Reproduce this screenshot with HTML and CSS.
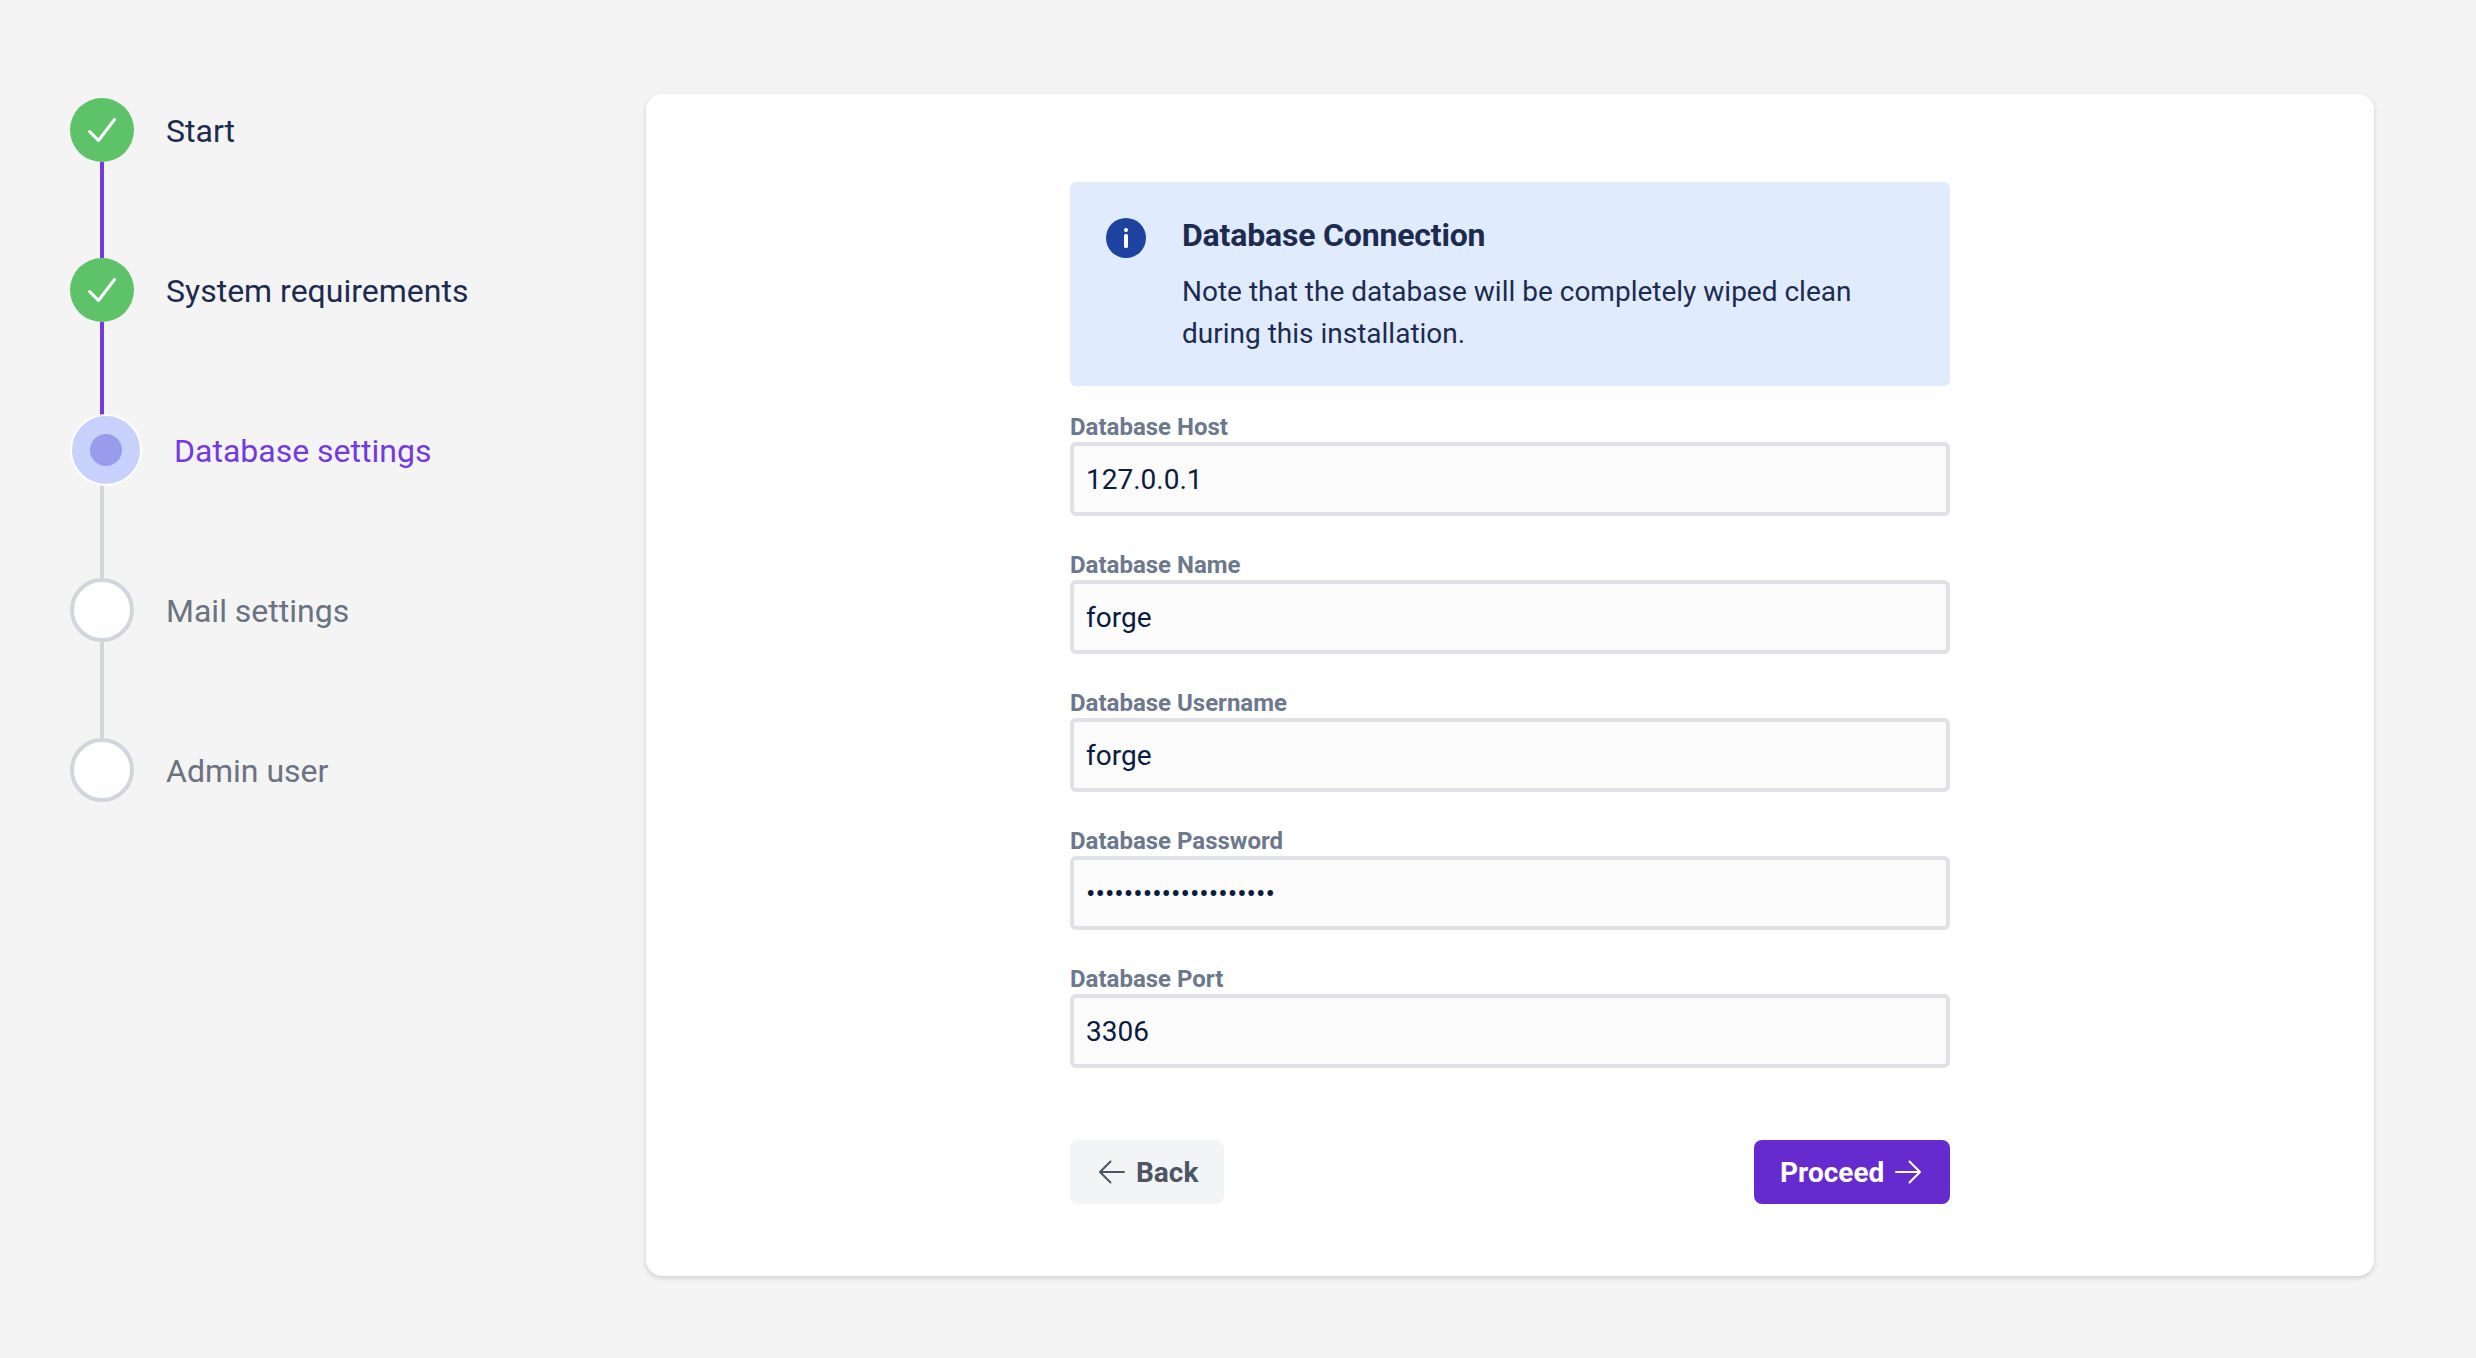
FILE: index.html
```html
<!DOCTYPE html>
<html lang="en">
<head>
<meta charset="utf-8">
<title>Installation</title>
<link rel="stylesheet" href="styles.css">
</head>
<body>
<div class="layout">
  <ol class="steps">
    <li class="step step-done">
      <span class="marker"><svg class="check" viewBox="0 0 64 64"><path d="M19.5 33.5 28.5 42.5 44.5 21.5"/></svg></span>
      <span class="step-name">Start</span>
    </li>
    <li class="step step-done">
      <span class="marker"><svg class="check" viewBox="0 0 64 64"><path d="M19.5 33.5 28.5 42.5 44.5 21.5"/></svg></span>
      <span class="step-name">System requirements</span>
    </li>
    <li class="step step-active">
      <span class="marker"><span class="dot"></span></span>
      <span class="step-name">Database settings</span>
    </li>
    <li class="step">
      <span class="marker"></span>
      <span class="step-name">Mail settings</span>
    </li>
    <li class="step">
      <span class="marker"></span>
      <span class="step-name">Admin user</span>
    </li>
  </ol>
  <main class="card">
    <form class="form">
      <div class="alert">
        <svg class="info" viewBox="0 0 40 40"><circle cx="20" cy="20" r="20" fill="#1e429f"/><circle cx="20" cy="12.1" r="2.1" fill="#fff"/><rect x="18" y="16" width="4" height="14" rx="1.6" fill="#fff"/></svg>
        <div class="alert-body">
          <h1 class="alert-title">Database Connection</h1>
          <p class="alert-text">Note that the database will be completely wiped clean during this installation.</p>
        </div>
      </div>
      <div class="fields">
        <label class="field"><span class="label">Database Host</span><input class="input" type="text" value="127.0.0.1"></label>
        <label class="field"><span class="label">Database Name</span><input class="input" type="text" value="forge"></label>
        <label class="field"><span class="label">Database Username</span><input class="input" type="text" value="forge"></label>
        <label class="field"><span class="label">Database Password</span><input class="input" type="password" value="12345678901234567890"></label>
        <label class="field"><span class="label">Database Port</span><input class="input" type="text" value="3306"></label>
      </div>
      <div class="actions">
        <button class="button button-back" type="button"><svg class="arrow" viewBox="0 0 28 24"><path d="M12.5 1.5 2 12 12.5 22.5M2 12H26"/></svg>Back</button>
        <button class="button button-next" type="button">Proceed<svg class="arrow" viewBox="0 0 28 24"><path d="M15.5 1.5 26 12 15.5 22.5M26 12H2"/></svg></button>
      </div>
    </form>
  </main>
</div>
</body>
</html>
```
FILE: styles.css
```css
* { box-sizing: border-box; }
body {
  margin: 0;
  background: #f4f4f4;
  font-family: Roboto, "Liberation Sans", sans-serif;
  color: #1c2b4f;
}
.layout {
  display: grid;
  grid-template-columns: 576px 1728px;
  align-items: start;
  padding: 94px 70px 0;
  min-height: 1358px;
}
.steps {
  list-style: none;
  margin: 0;
  padding: 4px 0 0;
}
.step {
  position: relative;
  display: flex;
  align-items: center;
  gap: 32px;
  height: 64px;
  margin-bottom: 96px;
  color: #6b7280;
}
.step:not(:last-child)::after {
  content: "";
  position: absolute;
  left: 30px;
  top: 64px;
  width: 4px;
  height: 96px;
  background: #d2d6dc;
}
.marker {
  display: flex;
  align-items: center;
  justify-content: center;
  flex: none;
  width: 64px;
  height: 64px;
  border: 4px solid #d2d6dc;
  border-radius: 50%;
  background: #fff;
}
.step-name {
  padding-top: 2px;
  font-size: 32px;
  line-height: 48px;
}
.step-done { color: #1c2b4f; }
.step-done .marker { border: 0; background: #5ec269; }
.step-done::after { background: #743ae1 !important; }
.step-active { color: #743ae1; }
.step-active .marker {
  position: relative;
  z-index: 1;
  width: 72px;
  height: 72px;
  border: 2px solid #fff;
  background: #c8d1fb;
}
.dot { width: 32px; height: 32px; border-radius: 50%; background: #9a9bec; }
.check { width: 64px; height: 64px; fill: none; stroke: #fff; stroke-width: 3; stroke-linecap: round; stroke-linejoin: round; }
.card {
  height: 1182px;
  padding: 88px 0 72px;
  background: #fff;
  border-radius: 16px;
  box-shadow: 0 2px 6px rgba(0, 0, 0, .1), 0 2px 4px rgba(0, 0, 0, .06);
}
.form { width: 880px; margin: 0 auto; }
.alert {
  display: flex;
  gap: 36px;
  height: 204px;
  padding: 29px 36px;
  border-radius: 6px;
  background: #e0ebfd;
}
.info { width: 40px; height: 40px; margin-top: 7px; flex: none; }
.alert-title { margin: 0; font-size: 32px; line-height: 48px; font-weight: 700; letter-spacing: -.18px; }
.alert-text { margin: 12px 0 0; font-size: 28px; line-height: 42px; }
.fields { display: grid; gap: 34px; margin-top: 26px; }
.field { display: block; }
.label { display: block; font-size: 24px; line-height: 30px; font-weight: 700; color: #6c788d; }
.input {
  display: block;
  width: 100%;
  height: 74px;
  padding: 0 12px;
  border: 4px solid #e0e1e6;
  border-radius: 6px;
  background: #fbfbfb;
  color: #0b1c42;
  font: 28px Roboto, "Liberation Sans", sans-serif;
}
.actions { display: flex; justify-content: space-between; margin-top: 72px; }
.button {
  display: flex;
  align-items: center;
  gap: 10px;
  height: 64px;
  padding: 0 26px;
  border: 0;
  border-radius: 8px;
  font: 700 28px Roboto, "Liberation Sans", sans-serif;
}
.button-back { background: #f3f4f6; color: #4b5563; width: 154px; padding: 0 24px 0 28px; }
.button-next { background: #652bcf; color: #fff; width: 196px; }
.arrow { width: 28px; height: 24px; flex: none; fill: none; stroke: currentColor; stroke-width: 2; stroke-linecap: round; stroke-linejoin: round; }
```
